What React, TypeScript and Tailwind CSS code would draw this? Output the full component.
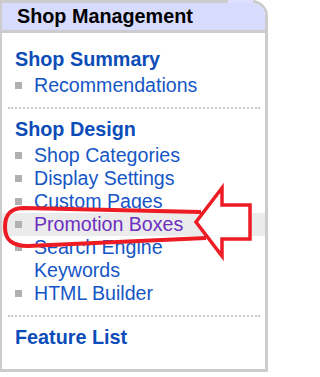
import React from "react";

const items1 = ["Recommendations"];

function Item({ label, active }: { label: React.ReactNode; active?: boolean }) {
  return (
    <div className={`flex items-start pl-[13px] leading-[23px] ${active ? "bg-[#ebebeb]" : ""}`}>
      <span className="mt-[8px] h-[7px] w-[7px] shrink-0 bg-[#b0b0b0]" />
      <span className={`ml-[12px] max-w-[200px] text-[19.6px] ${active ? "text-[#6c2fc0]" : "text-[#1556c6]"}`}>
        {label}
      </span>
    </div>
  );
}

function Heading({ children }: { children: React.ReactNode }) {
  return <div className="pl-[13px] text-[19.8px] font-bold leading-[23px] text-[#0c4cb8]">{children}</div>;
}

export default function App() {
  return (
    <div className="relative h-[377px] w-[273px] overflow-hidden bg-white font-['Liberation_Sans',Arial,sans-serif]">
      <div className="w-[268px] overflow-hidden rounded-tr-[16px] border-b-[3px] border-l-2 border-r-[3px] border-t-[3px] border-[#cccccc]">
        <div className="h-[30px] border-b-[3px] border-[#cccccc] bg-[#d7dcff] pl-[15px] text-[19.8px] font-bold leading-[27px] text-black">
          Shop Management
        </div>
        <div className="pb-[20px] pt-[15px]">
          <Heading>Shop Summary</Heading>
          <div className="mt-[3px]">
            {items1.map((t) => (
              <Item key={t} label={t} />
            ))}
          </div>
          <div className="ml-[6px] mr-[5px] mt-[10px] border-t-2 border-dotted border-[#cccccc]" />
          <div className="mt-[9px]">
            <Heading>Shop Design</Heading>
          </div>
          <div className="mt-[3px]">
            <Item label="Shop Categories" />
            <Item label="Display Settings" />
            <Item label="Custom Pages" />
            <Item label="Promotion Boxes" active />
            <Item label="Search Engine Keywords" />
            <Item label="HTML Builder" />
          </div>
          <div className="ml-[6px] mr-[5px] mt-[10px] border-t-2 border-dotted border-[#cccccc]" />
          <div className="mt-[9px]">
            <Heading>Feature List</Heading>
          </div>
        </div>
      </div>
      <div className="absolute left-[228px] top-0 h-[3px] w-[25px] bg-[#dde1ff]" />
      <svg className="pointer-events-none absolute left-0 top-0" width="273" height="377" viewBox="0 0 273 377">
        <path
          d="M 201 212 L 24 208 C 9 208 5 216 5 227 C 5 240 12 246 28 246 L 206 238"
          fill="none"
          stroke="#ed1c24"
          strokeWidth="4"
          strokeLinejoin="round"
        />
        <polygon
          points="196,222 222,188 222,205 250,205 250,239 222,239 222,256"
          fill="#ffffff"
          stroke="#ed1c24"
          strokeWidth="3.5"
          strokeLinejoin="miter"
        />
      </svg>
    </div>
  );
}
